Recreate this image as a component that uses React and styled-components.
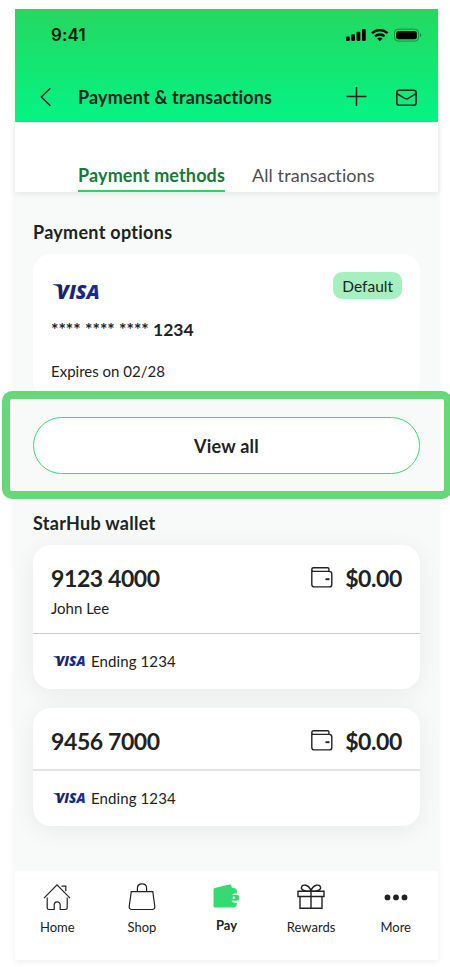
import React from "react";
import styled, { createGlobalStyle } from "styled-components";

const GlobalStyle = createGlobalStyle`
  body {
    margin: 0;
    background: #fff;
    overflow: hidden;
    font-family: Lato, "Open Sans", sans-serif;
    font-variant-ligatures: none;
    color: #212322;
  }
`

const Page = styled.div`
  width: 450px;
  height: 967px;
  padding: 9px 12px 0 15px;
  overflow: hidden;
  box-sizing: border-box;
`

const Phone = styled.div`
  height: 951px;
  display: flex;
  flex-direction: column;
  box-shadow: 0 2px 6px rgba(0, 0, 0, 0.07);
`

const Header = styled.header`
  height: 113px;
  box-sizing: border-box;
  background: linear-gradient(#24d860, #03f485);
`

const StatusBar = styled.div`
  height: 51px;
  padding: 0 16px 0 36px;
  display: flex;
  justify-content: space-between;
  align-items: center;
`

const Clock = styled.div`
  font-family: Inter, sans-serif;
  font-size: 17px;
  font-weight: 600;
  letter-spacing: 0.1px;
  color: #041408;
`

const TitleBar = styled.div`
  height: 60px;
  padding: 13px 20px 0 21px;
  display: flex;
  align-items: center;
  box-sizing: border-box;
`

const Title = styled.h1`
  flex: 1;
  margin: 0 0 0 22px;
  font-size: 18px;
  font-weight: 700;
  line-height: 24px;
  letter-spacing: 0.17px;
`

const Actions = styled.div`
  display: flex;
  align-items: center;
  gap: 27px;
`

const Tabs = styled.nav`
  height: 70px;
  padding: 0 62px 0 63px;
  display: flex;
  align-items: flex-end;
  gap: 27px;
  box-sizing: border-box;
  background: #fff;
  box-shadow: 0 2px 6px rgba(0, 0, 0, 0.08);
  z-index: 1;
`

const Tab = styled.div`
  height: 29px;
  font-size: 18px;
  line-height: 24px;
  letter-spacing: ${({active}) => active ? 0.14 : 0.08}px;
  white-space: nowrap;
  font-weight: ${({active}) => active ? 700 : 400};
  color: ${({active}) => active ? "#157a3a" : "#4d4f4e"};
  border-bottom: ${({active}) => active ? "2.500px solid #21d95f" : "2.500px solid transparent"};
  box-sizing: border-box;
`

const Content = styled.main`
  flex: 1;
  padding: 28px 18px 0;
  background: #f7faf9;
`

const SectionTitle = styled.h2`
  margin: 0;
  font-size: 18px;
  font-weight: 700;
  line-height: 25px;
  letter-spacing: 0.28px;
`

const PaymentCard = styled.section`
  height: 145px;
  margin-top: 9px;
  padding: 18px;
  background: #fff;
  border-radius: 18px;
  box-sizing: border-box;
`

const CardTop = styled.div`
  height: 46px;
  display: flex;
  justify-content: space-between;
  align-items: flex-start;
`

const Badge = styled.span`
  padding: 0 9px;
  border-radius: 9px;
  background: #a5f0be;
  font-size: 15.5px;
  line-height: 28px;
  height: 27px;
`

const CardNumber = styled.div`
  font-size: 17.5px;
  font-weight: 700;
  line-height: 24px;
`

const Expiry = styled.div`
  margin-top: 19px;
  font-size: 15px;
  line-height: 20px;
`

const ViewAllArea = styled.div`
  position: relative;
  margin-top: 18px;
`

const ViewAllButton = styled.button`
  display: block;
  width: 100%;
  height: 57px;
  padding: 0;
  border: 1px solid #37dc72;
  border-radius: 29px;
  background: #fff;
  color: #212322;
  font-family: inherit;
  font-size: 18px;
  font-weight: 700;
  letter-spacing: 0.25px;
`

// callout frame drawn over the button area
const Highlight = styled.div`
  position: absolute;
  top: -26px;
  left: -31px;
  width: 450px;
  height: 108px;
  border: 8px solid #67d878;
  border-radius: 10px;
  box-sizing: border-box;
  pointer-events: none;
`

const WalletTitle = styled(SectionTitle)`
  margin-top: 37px;
`

const WalletCard = styled.section`
  height: ${({height}) => height}px;
  margin-top: ${({gap}) => gap}px;
  display: flex;
  flex-direction: column;
  background: #fff;
  border-radius: 18px;
  box-shadow: 0 4px 24px rgba(0, 0, 0, 0.065);
`

const WalletTop = styled.div`
  flex: 1;
  padding: 17px 18px 0;
  border-bottom: ${({line}) => line};
`

const WalletRow = styled.div`
  display: flex;
  justify-content: space-between;
  align-items: center;
  height: 32px;
  font-size: 23px;
  font-weight: 700;
  letter-spacing: -0.4px;
`

const Balance = styled.div`
  display: flex;
  align-items: center;
  gap: 11px;
`

const Owner = styled.div`
  margin-top: 4px;
  font-size: 15px;
  line-height: 20px;
`

const WalletBottom = styled.div`
  height: 55px;
  padding: 0 19px 1px;
  display: flex;
  align-items: center;
  gap: 4px;
  box-sizing: border-box;
  font-size: 15px;
  letter-spacing: 0.1px;
`

const BottomNav = styled.nav`
  height: 89px;
  display: grid;
  grid-template-columns: repeat(5, 1fr);
  background: #fff;
  box-sizing: border-box;
`

const NavItem = styled.div`
  padding-top: 10px;
  display: flex;
  flex-direction: column;
  align-items: center;
  font-size: 13px;
  font-weight: ${({active}) => active ? 700 : 400};
`

const NavIcon = styled.div`
  height: ${({active}) => active ? 34 : 36}px;
  display: flex;
`

const NavLabel = styled.div`
  line-height: 20px;
`

const Visa = ({ width, height, id }) => (
  <svg width={width} height={height} viewBox="0 -7.5 48 32">
    <defs>
      <linearGradient id={id} x1="0" x2="1">
        <stop offset="0" stopColor="#1b2160" />
        <stop offset="1" stopColor="#142f9d" />
      </linearGradient>
    </defs>
    <path d="M2 2.1h7.400l1.800 8.400C9.500 6 6.500 3.500 2 2.500z" fill={`url(#${id})`} />
    <text x="5.500" y="16" textLength="40.500" lengthAdjust="spacingAndGlyphs" fontFamily="Open Sans" fontSize="19" fontWeight="800" fontStyle="italic" letterSpacing="0" fill={`url(#${id})`}>VISA</text>
  </svg>
)

const StatusIcons = () => (
  <svg width="76" height="15" viewBox="0 0 76 15">
    <rect x="0" y="9.500" width="3.700" height="4.500" rx="1.1" />
    <rect x="5.300" y="7.200" width="3.700" height="6.800" rx="1.1" />
    <rect x="10.600" y="4.700" width="3.700" height="9.300" rx="1.1" />
    <rect x="16" y="2" width="3.700" height="12" rx="1.1" />
    <g fill="none" stroke="#000" strokeWidth="2.400">
      <path d="M26 6.200c4.400-4.100 11.200-4.100 15.600 0" />
      <path d="M29 9.400c2.700-2.500 6.900-2.500 9.600 0" />
    </g>
    <path d="M31.200 11.500c1.500-1.300 3.700-1.300 5.200 0l-2.600 2.700z" />
    <rect x="48.500" y="2.100" width="24" height="12" rx="3.600" fill="none" stroke="#000" strokeOpacity=".35" />
    <rect x="50.200" y="3.900" width="20.600" height="8.400" rx="2.100" />
    <path d="M74 6v4.200c1.800-.8 1.800-3.400 0-4.200z" fillOpacity=".4" />
  </svg>
)

const BackIcon = () => (
  <svg width="20" height="24" viewBox="0 0 20 24" fill="none" stroke="#212322" strokeWidth="1.500">
    <path d="M14.300 3.300 5.300 12l9 8.700" />
  </svg>
)

const PlusIcon = () => (
  <svg width="22" height="22" viewBox="0 0 22 22" fill="none" stroke="#212322" strokeWidth="1.500">
    <path d="M11.500 1v19M1.500 10.500h20" />
  </svg>
)

const MailIcon = () => (
  <svg width="24" height="22" viewBox="0 0 24 22" fill="none" stroke="#212322" strokeWidth="1.500">
    <rect x="2.800" y="4.300" width="19.300" height="15" rx="2.500" />
    <path d="m2.900 7.700 7.900 4.600c1.100.6 2.300.6 3.400 0L22 7.700" />
  </svg>
)

const WalletIcon = () => (
  <svg width="24" height="24" viewBox="0 0 24 24" fill="none" stroke="#212322" strokeWidth="1.400">
    <path d="M18.900 5.300V3c0-.8-.5-1.200-1.200-1.200H3.600c-1.100 0-1.800.8-1.800 1.700v15c0 1.500.9 2.400 2.400 2.400h15.100c1.500 0 2.500-1 2.500-2.500V8c0-1.600-1-2.600-2.600-2.600H3.700c-1.100 0-1.900-.7-1.900-1.900" />
    <path d="M15.500 13.200h4" strokeWidth="1.900" />
  </svg>
)

const HomeIcon = () => (
  <svg width="30" height="32" viewBox="0 0 30 32" fill="none" stroke="#212322" strokeWidth="1.200">
    <path d="M2 17.200 15 3.800l13 13.400M19.500 5.200h4.300v5M5.200 16.500v10.300c0 1 .6 1.700 1.600 1.700h5.400V24c0-4.300 6-4.300 6 0v4.500h5.400c1 0 1.600-.7 1.600-1.700V16.500" />
  </svg>
)

const BagIcon = () => (
  <svg width="30" height="32" viewBox="0 0 30 32" fill="none" stroke="#212322" strokeWidth="1.200">
    <path d="M4.300 10.700h21.500l2 14.800c.2 1.800-.8 3-2.600 3H4.800c-1.800 0-2.800-1.200-2.600-3zM10.400 10.500V7.200c0-5.800 9.200-5.800 9.200 0v3.300" />
  </svg>
)

const PayIcon = () => (
  <svg width="30" height="32" viewBox="0 0 30 32">
    <path d="M2.500 8.600c0-.8.600-1.400 1.400-1.600l14.500-3.400c1-.2 1.800.3 2 1.200l.6 2.200h1.600c2 0 3.300 1.300 3.300 3.300v2.100h-2.600a4.900 4.900 0 0 0 0 9.300h2.600v1.500c0 2-1.300 3.200-3.300 3.200H4c-.9 0-1.500-.6-1.500-1.500z" fill="#35db71" />
    <rect x="19.300" y="13.800" width="9" height="6" rx="2.500" fill="#35db71" />
    <circle cx="22.800" cy="16.800" r="1.200" fill="#fff" />
  </svg>
)

const GiftIcon = () => (
  <svg width="30" height="32" viewBox="0 0 30 32" fill="none" stroke="#212322" strokeWidth="1.400">
    <path d="M2 10.300h26v5.200H2zM4 15.500h22v11.800H4zM15 10v17M15 9.800C9 10 5 9.300 5.400 6.700 6 2.400 13 3.500 15 9.800zM15 9.800c6 .2 10-.5 9.600-3.100C24 2.400 17 3.500 15 9.800z" />
  </svg>
)

const MoreIcon = () => (
  <svg width="30" height="32" viewBox="0 0 30 32" fill="#212322">
    <circle cx="6.500" cy="16.400" r="2.900" />
    <circle cx="15" cy="16.400" r="2.900" />
    <circle cx="23.500" cy="16.400" r="2.900" />
  </svg>
)

const wallets = [
  { number: "9123 4000", owner: "John Lee", height: 144, gap: 9, line: "1px solid #c9cbca" },
  { number: "9456 7000", height: 118, gap: 19, line: "2px solid #e3e4e4" },
];

const navItems = [
  { label: "Home", Icon: HomeIcon },
  { label: "Shop", Icon: BagIcon },
  { label: "Pay", Icon: PayIcon, active: true },
  { label: "Rewards", Icon: GiftIcon },
  { label: "More", Icon: MoreIcon },
];

export default function App() {
  return (
    <Page>
      <GlobalStyle />
      <Phone>
        <Header>
          <StatusBar>
            <Clock>9:41</Clock>
            <StatusIcons />
          </StatusBar>
          <TitleBar>
            <BackIcon />
            <Title>Payment &amp; transactions</Title>
            <Actions>
              <PlusIcon />
              <MailIcon />
            </Actions>
          </TitleBar>
        </Header>
        <Tabs>
          <Tab active>Payment methods</Tab>
          <Tab>All transactions</Tab>
        </Tabs>
        <Content>
          <SectionTitle>Payment options</SectionTitle>
          <PaymentCard>
            <CardTop>
              <Visa width={51} height={38} id="visa-main" />
              <Badge>Default</Badge>
            </CardTop>
            <CardNumber>**** **** **** 1234</CardNumber>
            <Expiry>Expires on 02/28</Expiry>
          </PaymentCard>
          <ViewAllArea>
            <ViewAllButton>View all</ViewAllButton>
            <Highlight />
          </ViewAllArea>
          <WalletTitle>StarHub wallet</WalletTitle>
          {
            wallets.map(w =>
              <WalletCard key={w.number} height={w.height} gap={w.gap}>
                <WalletTop line={w.line}>
                  <WalletRow>
                    <span>{w.number}</span>
                    <Balance><WalletIcon />$0.00</Balance>
                  </WalletRow>
                  {w.owner && <Owner>{w.owner}</Owner>}
                </WalletTop>
                <WalletBottom>
                  <Visa width={35} height={24} id={`visa-${w.height}`} />
                  Ending 1234
                </WalletBottom>
              </WalletCard>
            )
          }
        </Content>
        <BottomNav>
          {
            navItems.map(({ label, Icon, active }) =>
              <NavItem key={label} active={active}>
                <NavIcon active={active}><Icon /></NavIcon>
                <NavLabel>{label}</NavLabel>
              </NavItem>
            )
          }
        </BottomNav>
      </Phone>
    </Page>
  );
}
